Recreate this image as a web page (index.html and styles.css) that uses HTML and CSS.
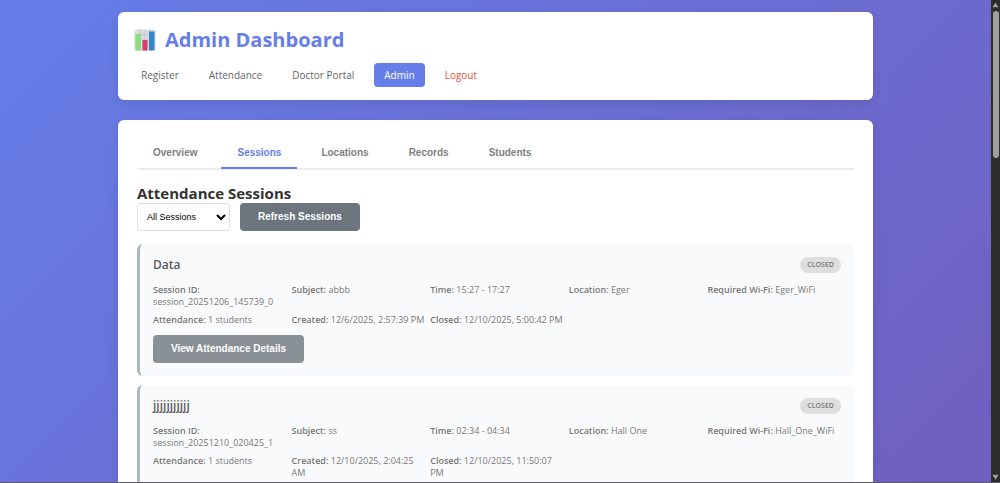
FILE: index.html
```html
<!DOCTYPE html>
<html lang="en">
  <head>
    <meta charset="UTF-8">
    <meta name="viewport" content="width=device-width, initial-scale=1.0">
    <title>Admin Dashboard</title>
    <link rel="stylesheet" href="styles.css">
  </head>
  <body>
    <div class="page">
      <div class="container">
        <header class="header">
          <h1>
            <svg class="logo" viewBox="0 0 22 22" aria-hidden="true">
              <rect x="0.5" y="0.5" width="21" height="21" rx="2" fill="#dcdbe3"/>
              <path d="M0.5 6h21M0.5 11h21M0.5 16h21M6 0.5v21M11 0.5v21M16 0.5v21" stroke="#bcbac8" stroke-width="0.6"/>
              <rect x="1.500" y="5" width="5.500" height="16.5" fill="#8fdc7c"/>
              <rect x="8.500" y="11" width="5" height="10.5" fill="#d93a70"/>
              <rect x="15" y="2.5" width="5.500" height="19" fill="#3287c4"/>
            </svg>
            Admin Dashboard
          </h1>
          <nav class="nav">
            <a href="#">Register</a>
            <a href="#">Attendance</a>
            <a href="#">Doctor Portal</a>
            <a href="#" class="active">Admin</a>
            <a href="#" class="logout">Logout</a>
          </nav>
        </header>

        <main class="panel">
          <div class="tabs">
            <button class="tab">Overview</button>
            <button class="tab active">Sessions</button>
            <button class="tab">Locations</button>
            <button class="tab">Records</button>
            <button class="tab">Students</button>
          </div>

          <h2>Attendance Sessions</h2>
          <div class="controls">
            <select class="filter" aria-label="Filter sessions">
              <option>All Sessions</option>
              <option>Active</option>
              <option>Closed</option>
            </select>
            <button class="btn">Refresh Sessions</button>
          </div>

          <div class="session-card">
            <div class="session-header">
              <h3>Data</h3>
              <span class="status">CLOSED</span>
            </div>
            <div class="session-info">
              <div><strong>Session ID:</strong> session_20251206_145739_0</div>
              <div><strong>Subject:</strong> abbb</div>
              <div><strong>Time:</strong> 15:27 - 17:27</div>
              <div><strong>Location:</strong> Eger</div>
              <div><strong>Required Wi-Fi:</strong> Eger_WiFi</div>
              <div><strong>Attendance:</strong> 1 students</div>
              <div><strong>Created:</strong> 12/6/2025, 2:57:39 PM</div>
              <div><strong>Closed:</strong> 12/10/2025, 5:00:42 PM</div>
            </div>
            <button class="btn">View Attendance Details</button>
          </div>

          <div class="session-card">
            <div class="session-header">
              <h3>jjjjjjjjjjj</h3>
              <span class="status">CLOSED</span>
            </div>
            <div class="session-info">
              <div><strong>Session ID:</strong> session_20251210_020425_1</div>
              <div><strong>Subject:</strong> ss</div>
              <div><strong>Time:</strong> 02:34 - 04:34</div>
              <div><strong>Location:</strong> Hall One</div>
              <div><strong>Required Wi-Fi:</strong> Hall_One_WiFi</div>
              <div><strong>Attendance:</strong> 1 students</div>
              <div><strong>Created:</strong> 12/10/2025, 2:04:25 AM</div>
              <div><strong>Closed:</strong> 12/10/2025, 11:50:07 PM</div>
            </div>
          </div>
        </main>
      </div>
    </div>

    <div class="scrollbar" aria-hidden="true">
      <svg viewBox="0 0 8 6"><path d="M4 0L7.500 5.500h-7z"/></svg>
      <div class="track"><div class="thumb"></div></div>
      <svg viewBox="0 0 8 6"><path d="M4 6L0.500 0.500h7z"/></svg>
    </div>
  </body>
</html>
```

FILE: styles.css
```css
* {
  box-sizing: border-box;
  margin: 0;
  padding: 0;
}
body {
  display: flex;
  height: 100vh;
  overflow: hidden;
  font-family: 'Open Sans', 'Noto Sans', sans-serif;
  color: #333;
  border-bottom: 1px solid #5c5c66;
}
.page {
  flex: 1;
  overflow: hidden;
  padding: 12px;
  background: linear-gradient(135deg, #667eea 0%, #764ba2 165%);
}
.container {
  max-width: 755px;
  margin: 0 auto;
}
.header {
  background: white;
  border-radius: 6px;
  padding: 13px;
  margin-bottom: 20px;
  box-shadow: 0 4px 12px rgba(0, 0, 0, 0.1);
}
.header h1 {
  display: flex;
  align-items: center;
  gap: 9px;
  padding: 0 3px;
  margin-bottom: 8px;
  font-size: 20px;
  line-height: 30px;
  color: #667eea;
}
.logo {
  width: 22px;
  height: 22px;
}
.nav {
  display: flex;
  gap: 10px;
}
.nav a {
  padding: 4px 10px;
  border-radius: 4px;
  font-size: 10px;
  line-height: 16px;
  color: #666;
  text-decoration: none;
}
.nav a.active {
  background: #667eea;
  color: white;
}
.nav a.logout {
  color: #e74c3c;
}
.panel {
  background: white;
  border-radius: 6px;
  padding: 18px 19px;
  box-shadow: 0 4px 12px rgba(0, 0, 0, 0.1);
}
.tabs {
  display: flex;
  gap: 8px;
  margin-bottom: 13px;
  border-bottom: 2px solid #ececee;
}
.tab {
  padding: 6px 16px 5px;
  margin-bottom: -1px;
  border: none;
  border-bottom: 2px solid transparent;
  background: none;
  font: bold 10px/18px 'Liberation Sans', sans-serif;
  color: #7f7f7f;
  cursor: pointer;
}
.tab.active {
  color: #667eea;
  border-bottom-color: #667eea;
}
.panel h2 {
  font-size: 15px;
  line-height: 20px;
}
.controls {
  display: flex;
  gap: 10px;
  margin-bottom: 13px;
}
.filter {
  width: 93px;
  height: 28px;
  padding: 0 5px;
  border: 1px solid #ddd;
  border-radius: 4px;
  background: white;
  font: 9px 'Liberation Sans', sans-serif;
  color: #000;
}
.btn {
  padding: 4px 18px;
  border: none;
  border-radius: 4px;
  background: #6c757d;
  font: bold 10px/20px 'Liberation Sans', sans-serif;
  color: white;
  cursor: pointer;
}
.session-card {
  padding: 12px 13px 13px;
  margin-bottom: 9px;
  border-left: 3px solid #95a5a6;
  border-radius: 6px;
  background: #f8fafc;
  opacity: 0.8;
}
.session-header {
  display: flex;
  justify-content: space-between;
  align-items: center;
  margin-bottom: 10px;
}
.session-header h3 {
  font-size: 12px;
  font-weight: 600;
  line-height: 18px;
}
.status {
  padding: 0 7px;
  border-radius: 8px;
  background: #d6d7d9;
  font-size: 7px;
  font-weight: 600;
  line-height: 16px;
  color: #555;
}
.session-info {
  display: grid;
  grid-template-columns: repeat(5, 1fr);
  gap: 6px 5px;
  margin-bottom: 9px;
  font-size: 9px;
  line-height: 12px;
  color: #555;
}
.session-info strong {
  font-weight: 600;
}
.scrollbar {
  display: flex;
  flex-direction: column;
  align-items: center;
  gap: 3px;
  width: 9px;
  padding: 2px 0;
  background: #2c2c2c;
}
.scrollbar svg {
  width: 7px;
  height: 6px;
  fill: #9f9f9f;
}
.track {
  flex: 1;
}
.thumb {
  width: 6px;
  height: 32%;
  border-radius: 3px;
  background: #9f9f9f;
}
```
